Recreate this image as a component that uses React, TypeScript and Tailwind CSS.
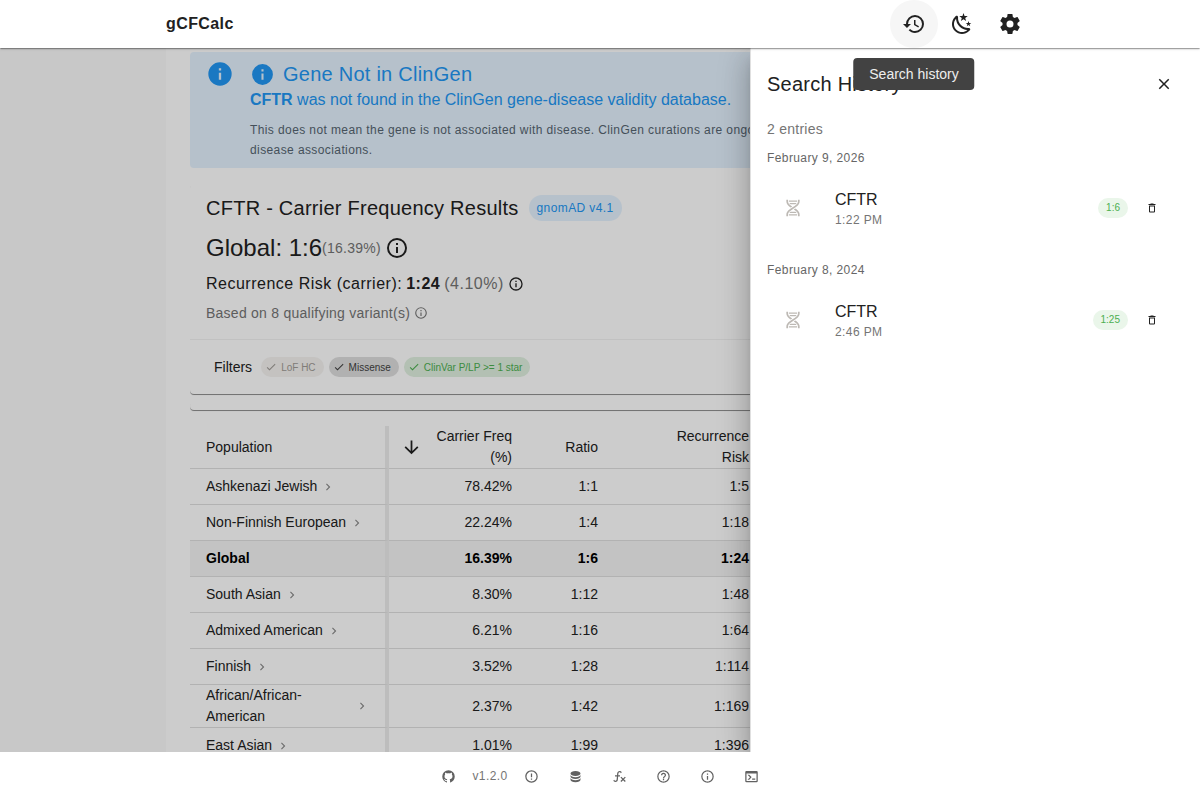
import type { ReactNode } from "react";

const ICONS = {
  history:
    "M13.5,8H12V13L16.28,15.54L17,14.33L13.5,12.25V8M13,3A9,9 0 0,0 4,12H1L4.96,16.03L9,12H6A7,7 0 0,1 13,5A7,7 0 0,1 20,12A7,7 0 0,1 13,19C11.07,19 9.32,18.21 8.06,16.94L6.64,18.36C8.27,20 10.5,21 13,21A9,9 0 0,0 22,12A9,9 0 0,0 13,3",
  night:
    "M17.75,4.09L15.22,6.03L16.13,9.09L13.5,7.28L10.87,9.09L11.78,6.03L9.25,4.09L12.44,4L13.5,1L14.56,4L17.75,4.09M21.25,11L19.61,12.25L20.2,14.23L18.5,13.06L16.8,14.23L17.39,12.25L15.75,11L17.81,10.95L18.5,9L19.19,10.95L21.25,11M18.97,15.95C19.8,15.87 20.69,17.05 20.16,17.8C19.84,18.25 19.5,18.67 19.08,19.07C15.17,23 8.84,23 4.94,19.07C1.03,15.17 1.03,8.83 4.94,4.93C5.34,4.53 5.76,4.17 6.21,3.85C6.96,3.32 8.14,4.21 8.06,5.04C7.79,7.9 8.75,10.87 10.95,13.06C13.14,15.26 16.1,16.22 18.97,15.95M17.33,17.97C14.5,17.81 11.7,16.64 9.53,14.5C7.36,12.31 6.2,9.5 6.04,6.68C3.23,9.82 3.34,14.64 6.35,17.66C9.37,20.67 14.19,20.78 17.33,17.97Z",
  cog: "M12,15.5A3.5,3.5 0 0,1 8.5,12A3.5,3.5 0 0,1 12,8.5A3.5,3.5 0 0,1 15.5,12A3.5,3.5 0 0,1 12,15.5M19.43,12.97C19.47,12.65 19.5,12.33 19.5,12C19.5,11.67 19.47,11.34 19.43,11L21.54,9.37C21.73,9.22 21.78,8.95 21.66,8.73L19.66,5.27C19.54,5.05 19.27,4.96 19.05,5.05L16.56,6.05C16.04,5.66 15.5,5.32 14.87,5.07L14.5,2.42C14.46,2.18 14.25,2 14,2H10C9.75,2 9.54,2.18 9.5,2.42L9.13,5.07C8.5,5.32 7.96,5.66 7.44,6.05L4.95,5.05C4.73,4.96 4.46,5.05 4.34,5.27L2.34,8.73C2.21,8.95 2.27,9.22 2.46,9.37L4.57,11C4.53,11.34 4.5,11.67 4.5,12C4.5,12.33 4.53,12.65 4.57,12.97L2.46,14.63C2.27,14.78 2.21,15.05 2.34,15.27L4.34,18.73C4.46,18.95 4.73,19.03 4.95,18.95L7.44,17.94C7.96,18.34 8.5,18.68 9.13,18.93L9.5,21.58C9.54,21.82 9.75,22 10,22H14C14.25,22 14.46,21.82 14.5,21.58L14.87,18.93C15.5,18.67 16.04,18.34 16.56,17.94L19.05,18.95C19.27,19.03 19.54,18.95 19.66,18.73L21.66,15.27C21.78,15.05 21.73,14.78 21.54,14.63L19.43,12.97Z",
  info: "M13,9H11V7H13M13,17H11V11H13M12,2A10,10 0 0,0 2,12A10,10 0 0,0 12,22A10,10 0 0,0 22,12A10,10 0 0,0 12,2Z",
  infoOutline:
    "M11,9H13V7H11M12,20C7.59,20 4,16.41 4,12C4,7.59 7.59,4 12,4C16.41,4 20,7.59 20,12C20,16.41 16.41,20 12,20M12,2A10,10 0 0,0 2,12A10,10 0 0,0 12,22A10,10 0 0,0 22,12A10,10 0 0,0 12,2M11,17H13V11H11V17Z",
  check: "M21,7L9,19L3.5,13.5L4.91,12.09L9,16.17L19.59,5.59L21,7Z",
  chevronRight: "M8.59,16.58L13.17,12L8.59,7.41L10,6L16,12L10,18L8.59,16.58Z",
  arrowDown:
    "M11,4H13V16L18.5,10.5L19.92,11.92L12,19.84L4.08,11.92L5.5,10.5L11,16V4Z",
  close:
    "M19,6.41L17.59,5L12,10.59L6.41,5L5,6.41L10.59,12L5,17.59L6.41,19L12,13.41L17.59,19L19,17.59L13.41,12L19,6.41Z",
  dna: "M4,2H6V4C6,5.44 6.68,6.61 7.88,7.78C8.74,8.61 9.89,9.41 11.09,10.2L9.26,11.39C8.27,10.72 7.31,10 6.5,9.21C5.07,7.82 4,6.1 4,4V2M18,2H20V4C20,6.1 18.93,7.82 17.5,9.21C16.09,10.58 14.29,11.73 12.54,12.84C10.79,13.96 9.09,15.05 7.88,16.22C6.68,17.39 6,18.56 6,20V22H4V20C4,17.9 5.07,16.18 6.5,14.79C7.91,13.42 9.71,12.27 11.46,11.16C13.21,10.04 14.91,8.95 16.12,7.78C17.32,6.61 18,5.44 18,4V2M14.74,12.61C15.73,13.28 16.69,14 17.5,14.79C18.93,16.18 20,17.9 20,20V22H18V20C18,18.56 17.32,17.39 16.12,16.22C15.26,15.39 14.11,14.59 12.91,13.8L14.74,12.61M7,3H17V4L16.94,4.5H7.06L7,4V3M7.68,6H16.32C16.08,6.34 15.8,6.69 15.42,7.06L14.91,7.5H9.07L8.58,7.06C8.2,6.69 7.92,6.34 7.68,6M9.09,16.5H14.93L15.42,16.94C15.8,17.31 16.08,17.66 16.32,18H7.68C7.92,17.66 8.2,17.31 8.58,16.94L9.09,16.5M7.06,19.5H16.94L17,20V21H7V20L7.06,19.5Z",
  trash:
    "M6,19A2,2 0 0,0 8,21H16A2,2 0 0,0 18,19V7H6V19M8,9H16V19H8V9M15.5,4L14.5,3H9.5L8.5,4H5V6H19V4H15.5Z",
  github:
    "M12,2A10,10 0 0,0 2,12C2,16.42 4.87,20.17 8.84,21.5C9.34,21.58 9.5,21.27 9.5,21C9.5,20.77 9.5,20.14 9.5,19.31C6.73,19.91 6.14,17.97 6.14,17.97C5.68,16.81 5.03,16.5 5.03,16.5C4.12,15.88 5.1,15.9 5.1,15.9C6.1,15.97 6.63,16.93 6.63,16.93C7.5,18.45 8.97,18 9.54,17.76C9.63,17.11 9.89,16.67 10.17,16.42C7.95,16.17 5.62,15.31 5.62,11.5C5.62,10.39 6,9.5 6.65,8.79C6.55,8.54 6.2,7.5 6.75,6.15C6.75,6.15 7.59,5.88 9.5,7.17C10.29,6.95 11.15,6.84 12,6.84C12.85,6.84 13.71,6.95 14.5,7.17C16.41,5.88 17.25,6.15 17.25,6.15C17.8,7.5 17.45,8.54 17.35,8.79C18,9.5 18.38,10.39 18.38,11.5C18.38,15.32 16.04,16.16 13.81,16.41C14.17,16.72 14.5,17.33 14.5,18.26C14.5,19.6 14.5,20.68 14.5,21C14.5,21.27 14.66,21.59 15.17,21.5C19.14,20.16 22,16.42 22,12A10,10 0 0,0 12,2Z",
  alert:
    "M11,15H13V17H11V15M11,7H13V13H11V7M12,2C6.47,2 2,6.5 2,12A10,10 0 0,0 12,22A10,10 0 0,0 22,12A10,10 0 0,0 12,2M12,20A8,8 0 0,1 4,12A8,8 0 0,1 12,4A8,8 0 0,1 20,12A8,8 0 0,1 12,20Z",
  database:
    "M12,3C7.58,3 4,4.79 4,7C4,9.21 7.58,11 12,11C16.42,11 20,9.21 20,7C20,4.79 16.42,3 12,3M4,9V12C4,14.21 7.58,16 12,16C16.42,16 20,14.21 20,12V9C20,11.21 16.42,13 12,13C7.58,13 4,11.21 4,9M4,14V17C4,19.21 7.58,21 12,21C16.42,21 20,19.21 20,17V14C20,16.21 16.42,18 12,18C7.58,18 4,16.21 4,14Z",
  fx: "M12.42,5.29C11.32,5.19 10.35,6 10.25,7.11L10,10H12.82V12H9.82L9.38,17.07C9.18,19.27 7.24,20.9 5.04,20.7C3.79,20.59 2.66,19.9 2,18.83L3.5,17.33C3.83,18.38 4.96,18.97 6,18.63C6.78,18.39 7.33,17.7 7.4,16.89L7.82,12H4.82V10H8L8.27,6.93C8.46,4.73 10.39,3.1 12.6,3.28C13.86,3.39 15,4.09 15.66,5.17L14.16,6.67C13.91,5.9 13.23,5.36 12.42,5.29M22,13.65L20.59,12.24L17.76,15.07L14.93,12.24L13.5,13.65L16.35,16.5L13.5,19.31L14.93,20.72L17.76,17.89L20.59,20.72L22,19.31L19.17,16.5L22,13.65Z",
  help: "M11,18H13V16H11V18M12,2A10,10 0 0,0 2,12A10,10 0 0,0 12,22A10,10 0 0,0 22,12A10,10 0 0,0 12,2M12,20C7.59,20 4,16.41 4,12C4,7.59 7.59,4 12,4C16.41,4 20,7.59 20,12C20,16.41 16.41,20 12,20M12,6A4,4 0 0,0 8,10H10A2,2 0 0,1 12,8A2,2 0 0,1 14,10C14,12 11,11.75 11,15H13C13,12.75 16,12.5 16,10A4,4 0 0,0 12,6Z",
  console:
    "M20,19V7H4V19H20M20,3A2,2 0 0,1 22,5V19A2,2 0 0,1 20,21H4A2,2 0 0,1 2,19V5C2,3.89 2.9,3 4,3H20M13,17V15H18V17H13M9.58,13L5.57,9H8.4L11.7,12.3C12.09,12.69 12.09,13.33 11.7,13.72L8.42,17H5.59L9.58,13Z",
};

type IconName = keyof typeof ICONS;

function Icon({ name, className }: { name: IconName; className: string }) {
  return (
    <svg
      viewBox="0 0 24 24"
      fill="currentColor"
      aria-hidden="true"
      className={`shrink-0 ${className}`}
    >
      <path d={ICONS[name]} />
    </svg>
  );
}

const populations = [
  { name: "Ashkenazi Jewish", freq: "78.42%", ratio: "1:1", risk: "1:5" },
  { name: "Non-Finnish European", freq: "22.24%", ratio: "1:4", risk: "1:18" },
  { name: "Global", freq: "16.39%", ratio: "1:6", risk: "1:24" },
  { name: "South Asian", freq: "8.30%", ratio: "1:12", risk: "1:48" },
  { name: "Admixed American", freq: "6.21%", ratio: "1:16", risk: "1:64" },
  { name: "Finnish", freq: "3.52%", ratio: "1:28", risk: "1:114" },
  { name: "African/African-American", freq: "2.37%", ratio: "1:42", risk: "1:169" },
  { name: "East Asian", freq: "1.01%", ratio: "1:99", risk: "1:396" },
];

const historyEntries = [
  { date: "February 9, 2026", gene: "CFTR", time: "1:22 PM", ratio: "1:6" },
  { date: "February 8, 2024", gene: "CFTR", time: "2:46 PM", ratio: "1:25" },
];

const footerLinks: { icon: IconName; label: string }[] = [
  { icon: "alert", label: "Disclaimer" },
  { icon: "database", label: "Data sources" },
  { icon: "fx", label: "Methodology" },
  { icon: "help", label: "Help" },
  { icon: "infoOutline", label: "About" },
  { icon: "console", label: "Logs" },
];

const headerShadow =
  "shadow-[0_2px_1px_-1px_rgba(0,0,0,0.2),0_1px_1px_0_rgba(0,0,0,0.14),0_1px_3px_0_rgba(0,0,0,0.12)]";
const cardShadow =
  "shadow-[0_2px_1px_-1px_rgba(0,0,0,0.2),0_1px_0_0_rgba(0,0,0,0.3)]";

export default function App() {
  return (
    <div className="flex h-screen flex-col bg-[#fafafa] font-['Liberation_Sans',Arial,sans-serif] text-[#212121]">
      <AppHeader />
      <div className="relative min-h-0 flex-1 overflow-hidden">
        <main className="mx-auto h-full max-w-[868px] overflow-hidden bg-white px-6 pt-1">
          <ClinGenAlert />
          <ResultsSummary />
          <div className={`mt-2 h-2 rounded bg-white ${cardShadow}`} />
          <PopulationTable />
        </main>
        <div className="absolute inset-0 bg-black/20" />
        <HistoryDrawer />
      </div>
      <AppFooter />
    </div>
  );
}

function AppHeader() {
  return (
    <header className={`relative z-20 h-12 shrink-0 bg-white ${headerShadow}`}>
      <div className="mx-auto flex h-full max-w-[900px] items-center justify-between px-4">
        <a href="#" className="text-base font-bold tracking-wide">
          gCFCalc
        </a>
        <div className="flex">
          <div className="relative">
            <HeaderButton label="Search history" active>
              <Icon name="history" className="size-6" />
            </HeaderButton>
            <div
              role="tooltip"
              className="absolute top-[58px] left-1/2 -translate-x-1/2 rounded bg-[#424242] px-4 py-1.5 text-sm leading-5 whitespace-nowrap text-[#eeeeee]"
            >
              Search history
            </div>
          </div>
          <HeaderButton label="Dark theme">
            <Icon name="night" className="size-6" />
          </HeaderButton>
          <HeaderButton label="Settings">
            <Icon name="cog" className="size-6" />
          </HeaderButton>
        </div>
      </div>
    </header>
  );
}

function HeaderButton({
  label,
  active,
  children,
}: {
  label: string;
  active?: boolean;
  children: ReactNode;
}) {
  return (
    <button
      type="button"
      aria-label={label}
      className={`flex size-12 items-center justify-center rounded-full ${active ? "bg-[#f6f6f6]" : ""}`}
    >
      {children}
    </button>
  );
}

function ClinGenAlert() {
  return (
    <section className="flex gap-4 rounded bg-[#e4f2fe] px-4 pt-2 pb-2 text-[#2196f3]">
      <Icon name="info" className="size-7" />
      <div className="min-w-0 flex-1">
        <h2 className="flex h-7 items-center gap-2 text-xl tracking-[0.0125em]">
          <Icon name="info" className="size-[25px]" />
          Gene Not in ClinGen
        </h2>
        <p className="text-base leading-6">
          <strong>CFTR</strong> was not found in the ClinGen gene-disease
          validity database.
        </p>
        <p className="mt-2 text-xs leading-5 tracking-[0.0333em] text-[#566571]">
          This does not mean the gene is not associated with disease. ClinGen
          curations are ongoing and may not yet cover all gene-
          <br />
          disease associations.
        </p>
      </div>
    </section>
  );
}

function ResultsSummary() {
  return (
    <section className={`mt-4 rounded bg-white ${cardShadow}`}>
      <div className="px-4 pt-2">
        <div className="flex h-8 items-center gap-2.5">
          <h1 className="text-xl tracking-[0.0125em]">
            CFTR - Carrier Frequency Results
          </h1>
          <span className="rounded-full bg-[#e4f2fe] px-2 text-xs leading-[26px] tracking-[0.0333em] text-[#2196f3]">
            gnomAD v4.1
          </span>
        </div>
        <div className="mt-2 flex h-8 items-center">
          <span className="text-2xl">Global: 1:6</span>
          <span className="text-sm tracking-[0.0178em] text-[#757575]">
            (16.39%)
          </span>
          <Icon name="infoOutline" className="ml-1 size-6" />
        </div>
        <div className="mt-2 flex h-6 items-center gap-1 text-base tracking-[0.0313em]">
          <span>Recurrence Risk (carrier):</span>
          <strong>1:24</strong>
          <span className="text-[#757575]">(4.10%)</span>
          <Icon name="infoOutline" className="size-4" />
        </div>
        <div className="mt-[7px] flex h-5 items-center gap-1 text-sm tracking-[0.0178em] text-[#757575]">
          Based on 8 qualifying variant(s)
          <Icon name="infoOutline" className="size-3.5" />
        </div>
      </div>
      <div className="mt-4 flex h-[55px] items-center gap-[5px] border-t border-[#f2f2f2] px-6">
        <span className="mr-1 text-sm">Filters</span>
        <FilterChip className="bg-[#f5f3f1] text-[#a09b96]" label="LoF HC" />
        <FilterChip className="bg-[#dedede] text-[#424242]" label="Missense" />
        <FilterChip
          className="bg-[#e0f0e0] text-[#4caf50]"
          label="ClinVar P/LP >= 1 star"
        />
      </div>
    </section>
  );
}

function FilterChip({ label, className }: { label: string; className: string }) {
  return (
    <span
      className={`flex h-5 items-center gap-1 rounded-full pr-2 pl-1 text-[10px] ${className}`}
    >
      <Icon name="check" className="size-3" />
      {label}
    </span>
  );
}

function PopulationTable() {
  const firstColumn = "border-r-4 border-r-[#ededed] px-4 text-left";

  return (
    <div className="mt-4 overflow-hidden">
      <table className="w-full table-fixed border-separate border-spacing-0 text-sm">
        <colgroup>
          <col className="w-[199px]" />
          <col className="w-[139px]" />
          <col className="w-[86px]" />
          <col className="w-[151px]" />
          <col />
        </colgroup>
        <thead>
          <tr className="h-[43px] leading-[21px] *:border-b *:border-b-[#dfdfdf] *:font-normal">
            <th className={firstColumn}>Population</th>
            <th className="pr-4 pl-3">
              <div className="flex items-center justify-between gap-3">
                <Icon name="arrowDown" className="size-[21px]" />
                <span className="text-right">Carrier Freq (%)</span>
              </div>
            </th>
            <th className="px-4 text-right">Ratio</th>
            <th className="px-4 text-right">
              Recurrence
              <br />
              Risk
            </th>
            <th />
          </tr>
        </thead>
        <tbody>
          {populations.map((row) => {
            const isGlobal = row.name === "Global";

            return (
              <tr
                key={row.name}
                className={`h-9 leading-[21px] *:border-b *:border-b-[#dfdfdf] ${isGlobal ? "bg-[#f4f4f4] font-bold text-black" : ""}`}
              >
                <td className={firstColumn}>
                  <div className="flex items-center gap-1">
                    <span>{row.name}</span>
                    {!isGlobal && (
                      <Icon
                        name="chevronRight"
                        className="size-3.5 text-[#8a8a8a]"
                      />
                    )}
                  </div>
                </td>
                <td className="px-4 text-right">{row.freq}</td>
                <td className="px-4 text-right">{row.ratio}</td>
                <td className="px-4 text-right">{row.risk}</td>
                <td />
              </tr>
            );
          })}
        </tbody>
      </table>
    </div>
  );
}

function HistoryDrawer() {
  return (
    <aside className="absolute inset-y-0 right-0 w-[450px] border-l border-[#e0e0e0] bg-white p-4 shadow-[0_8px_10px_-5px_rgba(0,0,0,0.2),0_16px_24px_2px_rgba(0,0,0,0.14),0_6px_30px_5px_rgba(0,0,0,0.12)]">
      <div className="flex h-10 items-center justify-between">
        <h2 className="text-xl tracking-[0.0125em]">Search History</h2>
        <button
          type="button"
          aria-label="Close history"
          className="flex size-10 items-center justify-center"
        >
          <Icon name="close" className="size-[18px]" />
        </button>
      </div>
      <p className="mt-[15px] text-sm leading-5 tracking-[0.0178em] text-[#757575]">
        2 entries
      </p>
      <ul className="mt-[9px] flex flex-col gap-5">
        {historyEntries.map((entry) => (
          <li key={entry.date}>
            <h3 className="text-xs leading-5 tracking-[0.0333em] text-[#666666]">
              {entry.date}
            </h3>
            <div className="mt-2 flex h-16 items-center px-4">
              <Icon name="dna" className="size-5 text-[#bdb9b4]" />
              <div className="ml-8 flex-1">
                <div className="text-base leading-6">{entry.gene}</div>
                <div className="text-xs leading-4 tracking-[0.0333em] text-[#757575]">
                  {entry.time}
                </div>
              </div>
              <span className="rounded-full bg-[#eaf6ea] px-2 text-[10px] leading-5 text-[#4caf50]">
                {entry.ratio}
              </span>
              <button
                type="button"
                aria-label={`Delete ${entry.gene} entry`}
                className="ml-2 flex size-8 items-center justify-center"
              >
                <Icon name="trash" className="size-3" />
              </button>
            </div>
          </li>
        ))}
      </ul>
    </aside>
  );
}

function AppFooter() {
  return (
    <footer className="relative z-10 flex h-12 shrink-0 items-center justify-center gap-1 bg-white text-[#616161]">
      <a
        href="#"
        aria-label="GitHub"
        className="flex w-10 items-center justify-center"
      >
        <Icon name="github" className="size-[15px]" />
      </a>
      <span className="text-xs tracking-[0.0333em] text-[#757575]">v1.2.0</span>
      {footerLinks.map((link) => (
        <button
          key={link.icon}
          type="button"
          aria-label={link.label}
          className="flex w-10 items-center justify-center"
        >
          <Icon name={link.icon} className="size-[15px]" />
        </button>
      ))}
    </footer>
  );
}
